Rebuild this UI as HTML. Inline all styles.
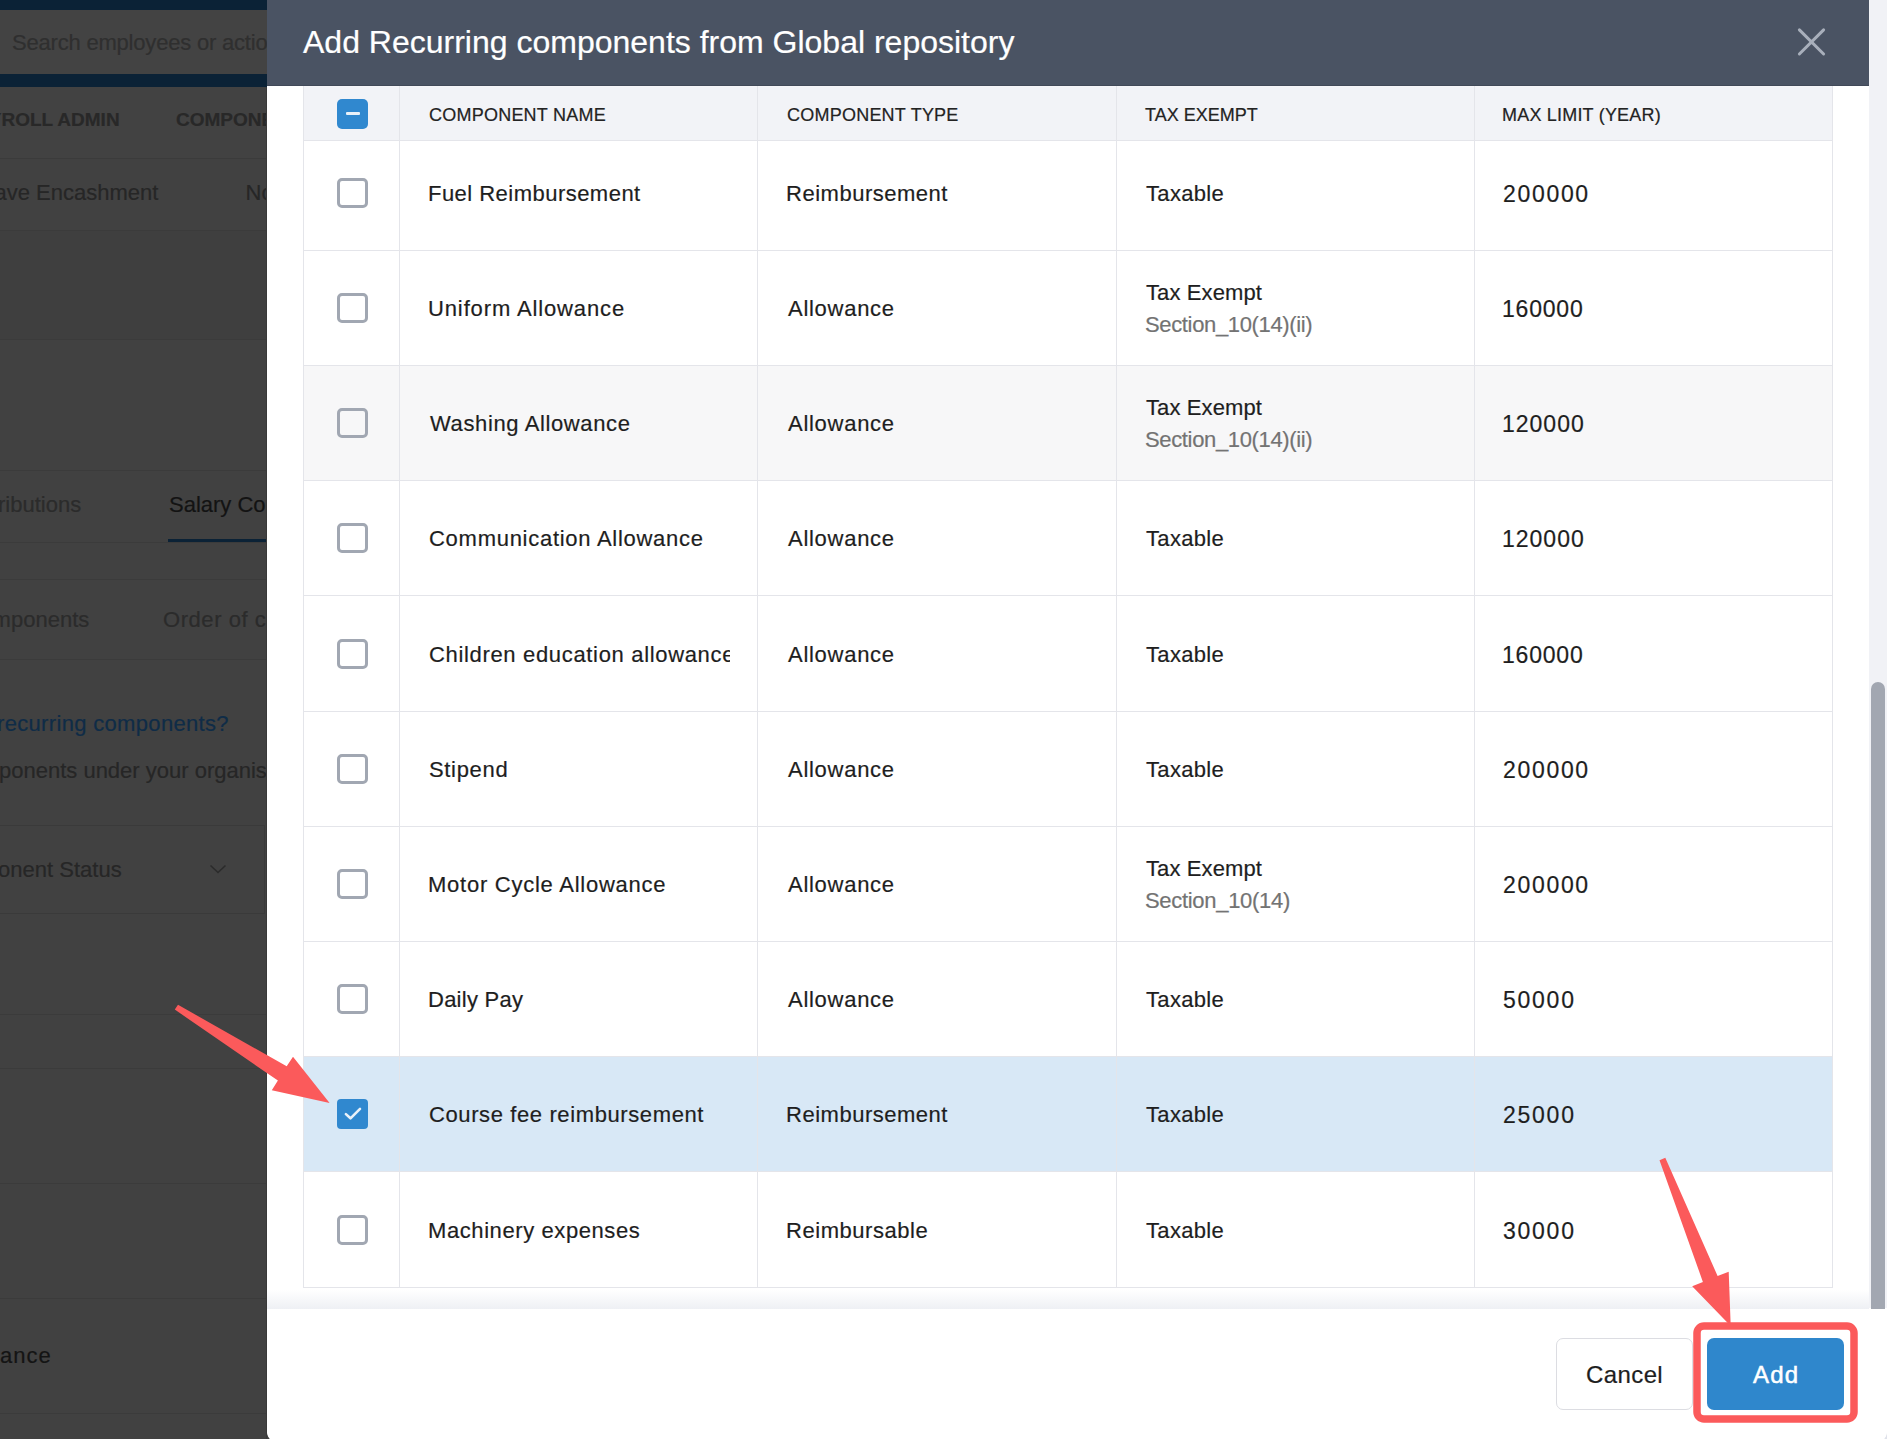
<!DOCTYPE html><html><head><meta charset="utf-8"><style>
*{margin:0;padding:0;box-sizing:border-box}
html,body{width:1887px;height:1439px;overflow:hidden;background:#414141;font-family:"Liberation Sans",sans-serif}
.abs{position:absolute}
.t{position:absolute;white-space:nowrap;line-height:1;-webkit-text-stroke:0.2px currentColor}
#bg{position:absolute;left:0;top:0;width:267px;height:1439px;overflow:hidden;background:#414141}
#modal{position:absolute;left:267px;top:0;width:1620px;height:1443px;background:#fff;border-radius:0 0 12px 12px;overflow:hidden}
.hline{position:absolute;height:1px;background:#e4e5ea}
.vline{position:absolute;width:1px;background:#e4e5ea}
.cb{position:absolute;width:31px;height:30px;border:3px solid #a1a7b2;border-radius:5px;background:transparent}
.cbon{position:absolute;width:31px;height:30px;border-radius:4px;background:#3088cf}
</style></head><body>
<div id="bg">
<div class="abs" style="left:0;top:0;width:267px;height:87px;background:#0b2236"></div>
<div class="abs" style="left:0;top:10px;width:267px;height:64px;background:#434343"></div>
<div class="t" style="left:12px;top:32px;font-size:22px;color:#2f2f2f;letter-spacing:-0.2px;">Search employees or actions</div>
<div class="abs" style="left:0;top:87px;width:267px;height:71px;background:#424242"></div>
<div class="t" style="left:-34.5px;top:110px;font-size:19px;color:#282828;font-weight:bold;">PAYROLL ADMIN</div>
<div class="t" style="left:176px;top:110px;font-size:19px;color:#282828;font-weight:bold;">COMPONENTS</div>
<div class="abs" style="left:0;top:158px;width:267px;height:1px;background:#3b3b3b"></div>
<div class="t" style="left:-30px;top:182px;font-size:22px;color:#262626;">Leave Encashment</div>
<div class="t" style="left:245.5px;top:182px;font-size:22px;color:#262626;">Notice Pay</div>
<div class="abs" style="left:0;top:230px;width:267px;height:1px;background:#3b3b3b"></div>
<div class="abs" style="left:0;top:231px;width:267px;height:108px;background:#3f3f3f"></div>
<div class="abs" style="left:0;top:339px;width:267px;height:1px;background:#3b3b3b"></div>
<div class="abs" style="left:0;top:470px;width:267px;height:1px;background:#3b3b3b"></div>
<div class="t" style="left:-48.5px;top:494px;font-size:22px;color:#2b2b2b;">Contributions</div>
<div class="t" style="left:169px;top:494px;font-size:22px;color:#131313;">Salary Components</div>
<div class="abs" style="left:168px;top:539px;width:100px;height:3px;background:#0b2236"></div>
<div class="abs" style="left:0;top:542px;width:267px;height:1px;background:#3b3b3b"></div>
<div class="abs" style="left:0;top:579px;width:267px;height:1px;background:#3b3b3b"></div>
<div class="t" style="left:-35.5px;top:609px;font-size:22px;color:#2b2b2b;">Components</div>
<div class="t" style="left:163px;top:609px;font-size:22px;color:#2b2b2b;letter-spacing:0.556px;">Order of components</div>
<div class="abs" style="left:0;top:659px;width:267px;height:1px;background:#3b3b3b"></div>
<div class="t" style="left:-3px;top:713px;font-size:22px;color:#0f2c47;letter-spacing:0.330px;">recurring components?</div>
<div class="t" style="left:-1px;top:760px;font-size:22px;color:#262626;">ponents under your organisation</div>
<div class="abs" style="left:0;top:825px;width:265px;height:89px;border:1px solid #3a3a3a;border-left:none"></div>
<div class="t" style="left:-60.599999999999994px;top:859px;font-size:22px;color:#262626;">Component Status</div>
<svg class="abs" style="left:208px;top:862px" width="20" height="14"><path d="M2.5 3.5 L10 10.5 L17.5 3.5" stroke="#2b2b2b" stroke-width="1.6" fill="none"/></svg>
<div class="abs" style="left:0;top:1014px;width:267px;height:1px;background:#3b3b3b"></div>
<div class="abs" style="left:0;top:1068px;width:267px;height:1px;background:#3b3b3b"></div>
<div class="abs" style="left:0;top:1183px;width:267px;height:1px;background:#3b3b3b"></div>
<div class="abs" style="left:0;top:1298px;width:267px;height:1px;background:#3b3b3b"></div>
<div class="t" style="left:0px;top:1345px;font-size:22px;color:#141414;letter-spacing:1.000px;">ance</div>
<div class="abs" style="left:0;top:1413px;width:267px;height:1px;background:#3b3b3b"></div>
</div>
<div class="abs" style="left:1860px;top:1410px;width:27px;height:29px;background:#dfe2ea"></div>
<div class="abs" style="left:266px;top:87px;width:1px;height:1352px;background:#393939"></div>
<div id="modal">
<div class="abs" style="left:1602px;top:0;width:18px;height:1308px;background:#f1f2f6"></div>
<div class="abs" style="left:1604px;top:682px;width:14px;height:640px;border-radius:7px;background:#a2a7b1"></div>
<div class="abs" style="left:37px;top:141px;width:1528px;height:109px;background:#fff"></div>
<div class="hline" style="left:36px;top:250px;width:1530px"></div>
<div class="cb" style="left:70px;top:178px"></div>
<div class="abs" style="left:0;top:0;width:463px;height:1439px;overflow:hidden"><div class="t" style="left:161px;top:183px;font-size:22px;color:#1e1e1e;letter-spacing:0.471px;">Fuel Reimbursement</div></div>
<div class="t" style="left:519px;top:183px;font-size:22px;color:#1e1e1e;letter-spacing:0.517px;">Reimbursement</div>
<div class="t" style="left:879px;top:183px;font-size:22px;color:#1e1e1e;letter-spacing:0.333px;">Taxable</div>
<div class="t" style="left:1236px;top:183px;font-size:23px;color:#1e1e1e;letter-spacing:1.680px;">200000</div>
<div class="abs" style="left:37px;top:251px;width:1528px;height:114px;background:#fff"></div>
<div class="hline" style="left:36px;top:365px;width:1530px"></div>
<div class="cb" style="left:70px;top:293px"></div>
<div class="abs" style="left:0;top:0;width:463px;height:1439px;overflow:hidden"><div class="t" style="left:161px;top:298px;font-size:22px;color:#1e1e1e;letter-spacing:0.875px;">Uniform Allowance</div></div>
<div class="t" style="left:521px;top:298px;font-size:22px;color:#1e1e1e;letter-spacing:0.725px;">Allowance</div>
<div class="t" style="left:879px;top:282px;font-size:22px;color:#1e1e1e;letter-spacing:0.111px;">Tax Exempt</div>
<div class="t" style="left:878px;top:314px;font-size:22px;color:#737373;letter-spacing:-0.353px;">Section_10(14)(ii)</div>
<div class="t" style="left:1235px;top:298px;font-size:23px;color:#1e1e1e;letter-spacing:0.800px;">160000</div>
<div class="abs" style="left:37px;top:366px;width:1528px;height:114px;background:#f7f7f8"></div>
<div class="hline" style="left:36px;top:480px;width:1530px"></div>
<div class="cb" style="left:70px;top:408px"></div>
<div class="abs" style="left:0;top:0;width:463px;height:1439px;overflow:hidden"><div class="t" style="left:163px;top:413px;font-size:22px;color:#1e1e1e;letter-spacing:0.625px;">Washing Allowance</div></div>
<div class="t" style="left:521px;top:413px;font-size:22px;color:#1e1e1e;letter-spacing:0.725px;">Allowance</div>
<div class="t" style="left:879px;top:397px;font-size:22px;color:#1e1e1e;letter-spacing:0.111px;">Tax Exempt</div>
<div class="t" style="left:878px;top:429px;font-size:22px;color:#737373;letter-spacing:-0.353px;">Section_10(14)(ii)</div>
<div class="t" style="left:1235px;top:413px;font-size:23px;color:#1e1e1e;letter-spacing:1.000px;">120000</div>
<div class="abs" style="left:37px;top:481px;width:1528px;height:114px;background:#fff"></div>
<div class="hline" style="left:36px;top:595px;width:1530px"></div>
<div class="cb" style="left:70px;top:523px"></div>
<div class="abs" style="left:0;top:0;width:463px;height:1439px;overflow:hidden"><div class="t" style="left:162px;top:528px;font-size:22px;color:#1e1e1e;letter-spacing:0.727px;">Communication Allowance</div></div>
<div class="t" style="left:521px;top:528px;font-size:22px;color:#1e1e1e;letter-spacing:0.725px;">Allowance</div>
<div class="t" style="left:879px;top:528px;font-size:22px;color:#1e1e1e;letter-spacing:0.333px;">Taxable</div>
<div class="t" style="left:1235px;top:528px;font-size:23px;color:#1e1e1e;letter-spacing:1.000px;">120000</div>
<div class="abs" style="left:37px;top:596px;width:1528px;height:115px;background:#fff"></div>
<div class="hline" style="left:36px;top:711px;width:1530px"></div>
<div class="cb" style="left:70px;top:639px"></div>
<div class="abs" style="left:0;top:0;width:463px;height:1439px;overflow:hidden"><div class="t" style="left:162px;top:644px;font-size:22px;color:#1e1e1e;letter-spacing:0.667px;">Children education allowance</div></div>
<div class="t" style="left:521px;top:644px;font-size:22px;color:#1e1e1e;letter-spacing:0.725px;">Allowance</div>
<div class="t" style="left:879px;top:644px;font-size:22px;color:#1e1e1e;letter-spacing:0.333px;">Taxable</div>
<div class="t" style="left:1235px;top:644px;font-size:23px;color:#1e1e1e;letter-spacing:0.800px;">160000</div>
<div class="abs" style="left:37px;top:712px;width:1528px;height:114px;background:#fff"></div>
<div class="hline" style="left:36px;top:826px;width:1530px"></div>
<div class="cb" style="left:70px;top:754px"></div>
<div class="abs" style="left:0;top:0;width:463px;height:1439px;overflow:hidden"><div class="t" style="left:162px;top:759px;font-size:22px;color:#1e1e1e;letter-spacing:0.667px;">Stipend</div></div>
<div class="t" style="left:521px;top:759px;font-size:22px;color:#1e1e1e;letter-spacing:0.725px;">Allowance</div>
<div class="t" style="left:879px;top:759px;font-size:22px;color:#1e1e1e;letter-spacing:0.333px;">Taxable</div>
<div class="t" style="left:1236px;top:759px;font-size:23px;color:#1e1e1e;letter-spacing:1.680px;">200000</div>
<div class="abs" style="left:37px;top:827px;width:1528px;height:114px;background:#fff"></div>
<div class="hline" style="left:36px;top:941px;width:1530px"></div>
<div class="cb" style="left:70px;top:869px"></div>
<div class="abs" style="left:0;top:0;width:463px;height:1439px;overflow:hidden"><div class="t" style="left:161px;top:874px;font-size:22px;color:#1e1e1e;letter-spacing:0.750px;">Motor Cycle Allowance</div></div>
<div class="t" style="left:521px;top:874px;font-size:22px;color:#1e1e1e;letter-spacing:0.725px;">Allowance</div>
<div class="t" style="left:879px;top:858px;font-size:22px;color:#1e1e1e;letter-spacing:0.111px;">Tax Exempt</div>
<div class="t" style="left:878px;top:890px;font-size:22px;color:#737373;letter-spacing:-0.308px;">Section_10(14)</div>
<div class="t" style="left:1236px;top:874px;font-size:23px;color:#1e1e1e;letter-spacing:1.680px;">200000</div>
<div class="abs" style="left:37px;top:942px;width:1528px;height:114px;background:#fff"></div>
<div class="hline" style="left:36px;top:1056px;width:1530px"></div>
<div class="cb" style="left:70px;top:984px"></div>
<div class="abs" style="left:0;top:0;width:463px;height:1439px;overflow:hidden"><div class="t" style="left:161px;top:989px;font-size:22px;color:#1e1e1e;letter-spacing:0.250px;">Daily Pay</div></div>
<div class="t" style="left:521px;top:989px;font-size:22px;color:#1e1e1e;letter-spacing:0.725px;">Allowance</div>
<div class="t" style="left:879px;top:989px;font-size:22px;color:#1e1e1e;letter-spacing:0.333px;">Taxable</div>
<div class="t" style="left:1236px;top:989px;font-size:23px;color:#1e1e1e;letter-spacing:1.750px;">50000</div>
<div class="abs" style="left:37px;top:1057px;width:1528px;height:114px;background:#d8e8f6"></div>
<div class="hline" style="left:36px;top:1171px;width:1530px"></div>
<div class="cbon" style="left:70px;top:1099px"><svg width="31" height="30" style="position:absolute;left:0;top:0"><path d="M8.9 15.1 L13.5 19.3 L23 9.8" stroke="#e9f1f9" stroke-width="2.6" fill="none" stroke-linecap="round" stroke-linejoin="round"/></svg></div>
<div class="abs" style="left:0;top:0;width:463px;height:1439px;overflow:hidden"><div class="t" style="left:162px;top:1104px;font-size:22px;color:#1e1e1e;letter-spacing:0.609px;">Course fee reimbursement</div></div>
<div class="t" style="left:519px;top:1104px;font-size:22px;color:#1e1e1e;letter-spacing:0.517px;">Reimbursement</div>
<div class="t" style="left:879px;top:1104px;font-size:22px;color:#1e1e1e;letter-spacing:0.333px;">Taxable</div>
<div class="t" style="left:1236px;top:1104px;font-size:23px;color:#1e1e1e;letter-spacing:1.750px;">25000</div>
<div class="abs" style="left:37px;top:1172px;width:1528px;height:115px;background:#fff"></div>
<div class="hline" style="left:36px;top:1287px;width:1530px"></div>
<div class="cb" style="left:70px;top:1215px"></div>
<div class="abs" style="left:0;top:0;width:463px;height:1439px;overflow:hidden"><div class="t" style="left:161px;top:1220px;font-size:22px;color:#1e1e1e;letter-spacing:0.588px;">Machinery expenses</div></div>
<div class="t" style="left:519px;top:1220px;font-size:22px;color:#1e1e1e;letter-spacing:0.545px;">Reimbursable</div>
<div class="t" style="left:879px;top:1220px;font-size:22px;color:#1e1e1e;letter-spacing:0.333px;">Taxable</div>
<div class="t" style="left:1236px;top:1220px;font-size:23px;color:#1e1e1e;letter-spacing:1.750px;">30000</div>
<div class="vline" style="left:36px;top:86px;height:1202px"></div>
<div class="vline" style="left:132px;top:86px;height:1202px"></div>
<div class="vline" style="left:490px;top:86px;height:1202px"></div>
<div class="vline" style="left:849px;top:86px;height:1202px"></div>
<div class="vline" style="left:1207px;top:86px;height:1202px"></div>
<div class="vline" style="left:1565px;top:86px;height:1202px"></div>
<div class="abs" style="left:36px;top:86px;width:1530px;height:1px;background:#f5f5f8"></div>
<div class="abs" style="left:37px;top:87px;width:1528px;height:53px;background:#f2f3f7"></div>
<div class="hline" style="left:36px;top:140px;width:1530px"></div>
<div class="vline" style="left:36px;top:86px;height:55px"></div>
<div class="vline" style="left:132px;top:86px;height:55px"></div>
<div class="vline" style="left:490px;top:86px;height:55px"></div>
<div class="vline" style="left:849px;top:86px;height:55px"></div>
<div class="vline" style="left:1207px;top:86px;height:55px"></div>
<div class="vline" style="left:1565px;top:86px;height:55px"></div>
<div class="cbon" style="left:70px;top:99px;height:30px;border-radius:5px"><div class="abs" style="left:9px;top:13px;width:14px;height:3px;background:#e9f1f9;border-radius:1px"></div></div>
<div class="t" style="left:162px;top:106px;font-size:18px;color:#232323;letter-spacing:0.231px;">COMPONENT NAME</div>
<div class="t" style="left:520px;top:106px;font-size:18px;color:#232323;letter-spacing:0.231px;">COMPONENT TYPE</div>
<div class="t" style="left:878px;top:106px;font-size:18px;color:#232323;letter-spacing:0.000px;">TAX EXEMPT</div>
<div class="t" style="left:1235px;top:106px;font-size:18px;color:#232323;letter-spacing:0.200px;">MAX LIMIT (YEAR)</div>
<div class="abs" style="left:0;top:0;width:1602px;height:86px;background:#4a5363;border-bottom:1px solid #414958"></div>
<div class="t" style="left:36px;top:26px;font-size:32px;color:#fff;letter-spacing:0.000px;">Add Recurring components from Global repository</div>
<svg class="abs" style="left:1523px;top:20px" width="44" height="44"><path d="M9.4 9.9 L33.6 34 M33.6 9.9 L9.4 34" stroke="#a8afbb" stroke-width="3" stroke-linecap="round"/></svg>
<div class="abs" style="left:0;top:1290px;width:1602px;height:19px;background:linear-gradient(to bottom,rgba(238,240,244,0),rgba(238,240,244,1))"></div>
<div class="abs" style="left:0;top:1309px;width:1620px;height:140px;background:#fff"></div>
<div class="abs" style="left:1289px;top:1338px;width:137px;height:72px;border:1px solid #dcdde2;border-radius:7px;background:#fff"></div>
<div class="t" style="left:1319px;top:1363px;font-size:24px;color:#1e1e1e;letter-spacing:0.400px;">Cancel</div>
<div class="abs" style="left:1440px;top:1338px;width:137px;height:72px;border-radius:7px;background:#2f87cc"></div>
<div class="t" style="left:1486px;top:1363px;font-size:24px;color:#fff;letter-spacing:1.2px;-webkit-text-stroke:0.5px #fff;">Add</div>
</div>
<svg style="position:absolute;left:0;top:0" width="1887" height="1439">
<polygon points="178,1004.8 286.7,1066.3 293,1056.8 329.6,1102.9 271.8,1090.2 277.9,1080.6 174.8,1009.6" fill="#fb5a5b"/>
<polygon points="1665.3,1157.8 1717.6,1276 1728.7,1271.8 1730.7,1326 1692.2,1286.3 1702.9,1281.9 1659.5,1160.2" fill="#fb5a5b"/>
<rect x="1697" y="1326" width="157" height="93" rx="7" ry="7" fill="none" stroke="#fb5a5b" stroke-width="7.5"/>
</svg>
</body></html>
